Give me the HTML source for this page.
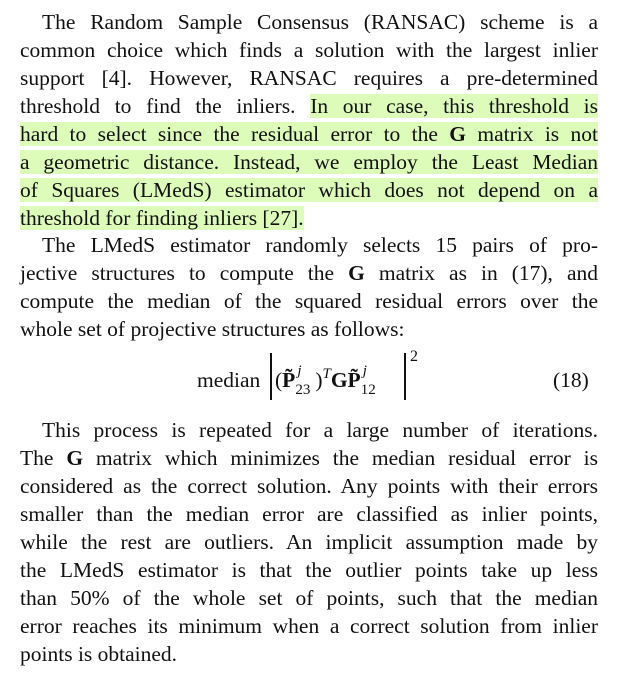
<!DOCTYPE html>
<html><head><meta charset="utf-8"><style>
html,body{margin:0;padding:0;background:#fff;}
body{width:618px;height:673px;position:relative;overflow:hidden;font-family:"Liberation Serif",serif;font-size:21.5px;color:#111;}
.l{position:absolute;left:20px;width:578px;line-height:28px;height:28px;text-align:justify;text-align-last:justify;white-space:nowrap;}
.l.n{text-align-last:left;}
.i{left:42px;width:556px;}
.h{background:#ddfbb9;}
b{font-weight:bold;}
.eq{position:absolute;line-height:28px;white-space:nowrap;}
.ss{display:inline-block;position:relative;width:20px;height:28px;vertical-align:top;font-size:15px;}
.ss .u{position:absolute;left:2px;top:-9px;font-style:italic;}
.ss .d{position:absolute;left:0;top:10px;}
</style></head><body>
<div class="l i" style="top:8px">The Random Sample Consensus (RANSAC) scheme is a</div>
<div class="l" style="top:36px">common choice which finds a solution with the largest inlier</div>
<div class="l" style="top:64px">support [4]. However, RANSAC requires a pre-determined</div>
<div class="l" style="top:92px">threshold to find the inliers. <span class="h">In our case, this threshold is</span></div>
<div class="l" style="top:120px"><span class="h">hard to select since the residual error to the <b>G</b> matrix is not</span></div>
<div class="l" style="top:148px"><span class="h">a geometric distance. Instead, we employ the Least Median</span></div>
<div class="l" style="top:176px"><span class="h">of Squares (LMedS) estimator which does not depend on a</span></div>
<div class="l n" style="top:204px"><span class="h">threshold for finding inliers [27].</span></div>
<div class="l i" style="top:231px">The LMedS estimator randomly selects 15 pairs of pro-</div>
<div class="l" style="top:259px">jective structures to compute the <b>G</b> matrix as in (17), and</div>
<div class="l" style="top:287px">compute the median of the squared residual errors over the</div>
<div class="l n" style="top:315px">whole set of projective structures as follows:</div>

<div class="eq" style="left:197px;top:366px">median</div>
<div style="position:absolute;left:270px;top:353px;width:1.5px;height:47px;background:#111"></div>
<div class="eq" style="left:275px;top:366px">(<b>P̃</b><span class="ss"><span class="u">j</span><span class="d">23</span></span>)<span style="font-size:15px;font-style:italic;position:relative;top:-9px">T</span><b>GP̃</b><span class="ss"><span class="u">j</span><span class="d">12</span></span></div>
<div style="position:absolute;left:404px;top:353px;width:1.5px;height:47px;background:#111"></div>
<div class="eq" style="left:410px;top:343px;font-size:16px">2</div>
<div class="eq" style="left:553px;top:366px">(18)</div>

<div class="l i" style="top:416px">This process is repeated for a large number of iterations.</div>
<div class="l" style="top:444px">The <b>G</b> matrix which minimizes the median residual error is</div>
<div class="l" style="top:472px">considered as the correct solution. Any points with their errors</div>
<div class="l" style="top:500px">smaller than the median error are classified as inlier points,</div>
<div class="l" style="top:528px">while the rest are outliers. An implicit assumption made by</div>
<div class="l" style="top:556px">the LMedS estimator is that the outlier points take up less</div>
<div class="l" style="top:584px">than 50% of the whole set of points, such that the median</div>
<div class="l" style="top:612px">error reaches its minimum when a correct solution from inlier</div>
<div class="l n" style="top:640px">points is obtained.</div>
</body></html>
